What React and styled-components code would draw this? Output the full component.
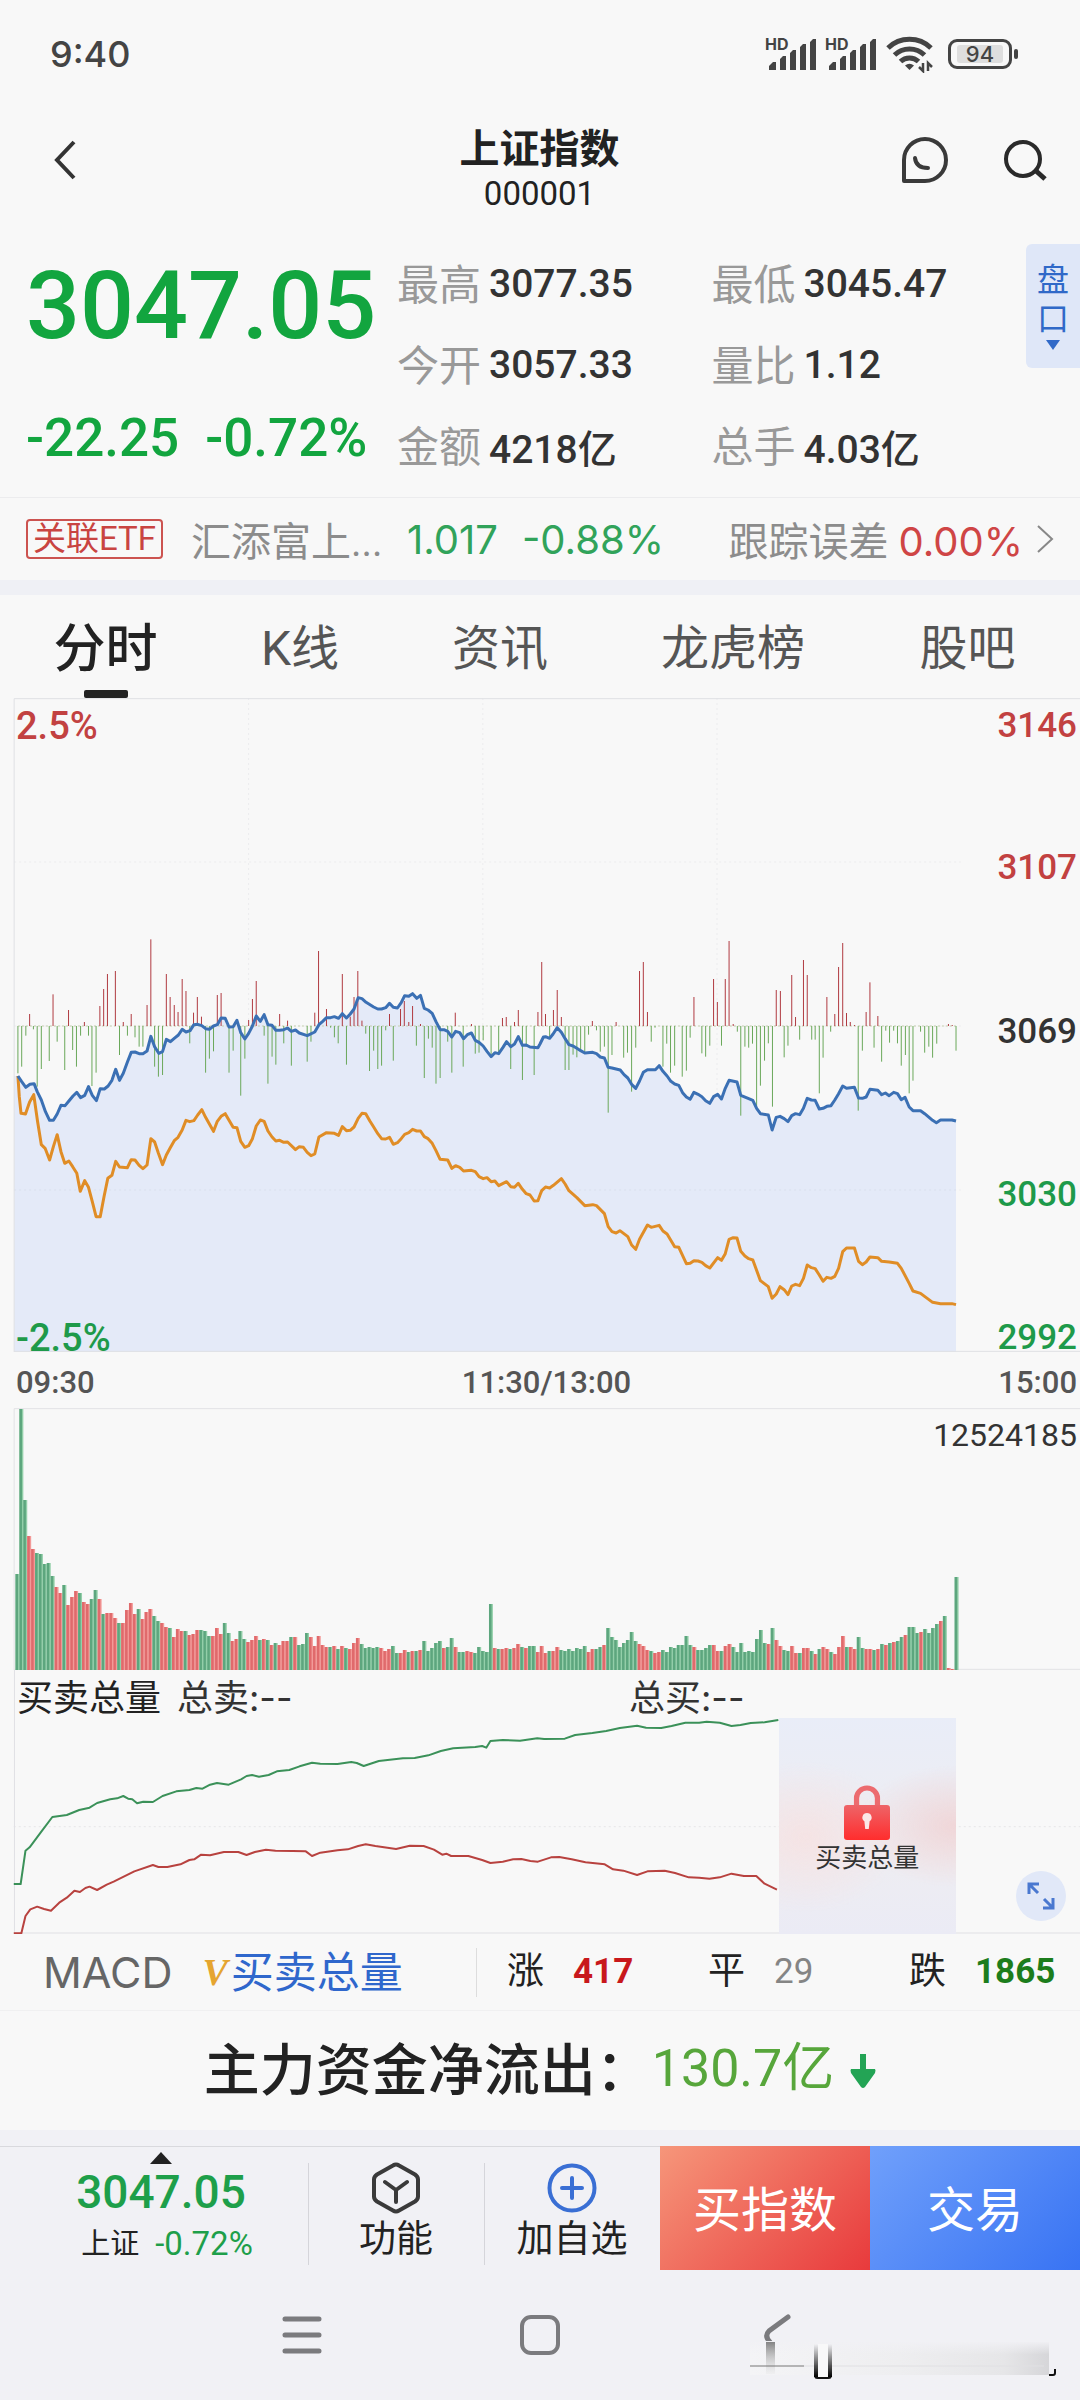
import styled, { createGlobalStyle } from 'styled-components';

const BLUE_LINE = '52,528 63,545 75,562 87,553 99,551 108,575 120,600 132,635 144,661 155,661 166,642 177,616 189,617 200,603 212,588 223,577 234,593 246,586 257,560 268,586 280,602 291,566 303,567 314,558 325,541 336,508 347,541 358,520 370,486 381,457 392,456 404,461 415,461 427,453 438,409 449,440 461,460 472,455 483,418 495,425 506,415 518,405 529,388 540,396 552,392 563,374 574,373 586,377 597,386 608,388 620,378 631,374 642,354 654,355 665,381 677,380 688,361 699,398 711,417 722,400 733,378 744,348 756,364 767,344 778,374 790,376 801,391 812,391 824,389 835,384 846,394 858,390 869,399 892,407 914,396 926,374 937,364 948,353 960,353 971,350 983,355 994,341 1006,354 1017,342 1028,327 1040,293 1051,296 1063,307 1085,321 1097,327 1108,327 1120,323 1131,310 1142,322 1154,324 1165,308 1175,287 1187,289 1198,281 1210,295 1221,286 1232,325 1243,330 1255,340 1266,365 1278,389 1289,389 1300,394 1312,411 1323,394 1335,398 1346,416 1357,404 1369,399 1380,421 1391,427 1403,438 1414,454 1426,470 1437,458 1448,461 1460,443 1471,425 1483,440 1494,432 1505,410 1517,436 1528,435 1539,441 1562,443 1568,432 1578,411 1584,410 1596,415 1606,402 1618,383 1630,397 1641,416 1652,434 1664,438 1675,445 1686,452 1698,459 1721,457 1732,461 1743,471 1755,474 1766,502 1777,504 1801,510 1812,524 1823,534 1834,553 1846,565 1857,543 1868,517 1880,509 1903,509 1914,497 1925,514 1937,528 1948,544 1959,552 1971,556 1982,578 1993,591 2004,598 2015,577 2027,583 2038,590 2049,602 2061,610 2072,590 2084,583 2095,597 2106,565 2117,541 2140,546 2151,586 2174,596 2186,601 2197,625 2208,641 2231,645 2242,690 2254,652 2265,649 2277,656 2288,665 2299,647 2310,641 2322,644 2333,625 2344,595 2356,600 2367,601 2379,627 2390,625 2401,619 2413,617 2424,600 2435,581 2447,558 2458,565 2481,562 2493,594 2504,595 2515,591 2526,568 2549,571 2560,584 2571,579 2582,587 2595,577 2606,581 2617,599 2628,592 2640,621 2651,632 2673,632 2685,641 2708,661 2719,668 2731,660 2764,660 2776,663';

const ORANGE_LINE = '52,528 56,590 61,640 74,642 86,606 98,584 109,664 120,734 131,745 144,780 155,740 166,704 177,755 188,790 200,783 211,800 223,820 233,874 246,842 257,862 268,905 279,950 291,950 302,890 313,835 325,826 336,784 347,801 370,803 381,779 392,780 404,796 415,806 427,795 438,716 449,726 460,760 472,794 483,765 494,744 506,722 517,712 529,690 540,661 551,665 563,662 574,645 586,629 597,652 608,672 620,694 631,664 642,649 654,641 665,661 677,682 688,683 699,724 711,742 722,737 733,716 744,678 756,660 767,664 778,693 790,711 801,723 812,721 824,727 835,726 858,749 869,740 881,742 892,757 903,767 914,762 926,711 948,698 971,700 983,706 994,680 1006,692 1017,691 1028,681 1040,655 1051,640 1062,641 1074,663 1085,681 1097,701 1108,716 1120,717 1131,712 1142,733 1154,728 1165,716 1175,703 1187,698 1198,688 1210,693 1221,693 1232,710 1243,716 1255,730 1266,752 1278,778 1300,780 1312,805 1323,797 1335,802 1346,813 1369,811 1380,815 1391,830 1403,836 1414,833 1426,845 1437,843 1448,857 1471,845 1483,860 1494,862 1505,850 1517,868 1528,881 1539,885 1551,903 1562,902 1568,885 1573,872 1584,861 1596,864 1607,856 1630,836 1641,852 1652,872 1675,893 1698,917 1721,914 1732,917 1755,941 1766,980 1777,995 1789,999 1800,992 1823,1010 1834,1035 1846,1048 1857,1018 1880,975 1891,982 1914,976 1925,993 1937,1002 1959,1040 1971,1042 1993,1091 2004,1090 2015,1082 2027,1083 2038,1087 2049,1097 2061,1104 2084,1073 2095,1081 2106,1061 2117,1018 2129,1013 2140,1014 2151,1054 2163,1068 2174,1076 2186,1080 2208,1142 2231,1160 2242,1195 2254,1182 2265,1160 2277,1169 2288,1184 2299,1158 2310,1153 2322,1157 2333,1135 2344,1095 2356,1103 2367,1106 2379,1125 2390,1144 2401,1132 2413,1135 2424,1129 2435,1105 2447,1055 2458,1044 2481,1044 2493,1084 2504,1094 2515,1086 2526,1071 2549,1073 2560,1084 2582,1086 2606,1090 2617,1105 2640,1150 2651,1173 2673,1180 2708,1207 2731,1211 2764,1211 2776,1214';

// x,y of the tip of each bar around the zero line
const ZERO_Y = 378;
const MOMENTUM = '52,520 63,500 75,407 86,342 97,388 108,560 120,507 143,483 154,283 166,425 188,510 199,330 211,450 222,500 234,407 245,366 257,407 267,558 279,518 290,318 301,267 312,222 335,213 347,465 358,366 370,407 381,342 392,412 404,440 415,440 427,315 438,118 449,500 460,530 472,525 483,222 494,291 506,315 517,336 529,237 540,273 551,430 562,338 573,291 585,350 597,518 608,476 620,454 631,285 642,279 665,518 677,452 699,587 711,476 722,360 733,297 744,243 767,407 778,551 790,470 801,494 812,342 824,430 835,362 846,497 892,485 903,425 914,338 925,153 948,327 960,383 971,412 982,430 994,222 1006,494 1017,350 1028,291 1039,213 1051,362 1062,401 1073,513 1085,452 1097,507 1108,497 1120,391 1131,342 1142,482 1163,327 1174,303 1187,366 1198,318 1209,437 1221,372 1232,534 1244,416 1255,443 1266,551 1278,534 1300,425 1312,518 1322,338 1345,500 1369,372 1380,461 1391,458 1403,421 1426,470 1448,458 1459,354 1470,351 1483,507 1494,366 1505,330 1517,540 1528,440 1551,525 1562,336 1573,186 1584,342 1596,416 1607,330 1618,270 1630,351 1641,510 1652,510 1664,464 1675,472 1686,450 1698,460 1709,404 1720,363 1732,391 1743,455 1755,440 1766,638 1777,465 1789,366 1811,473 1822,458 1834,575 1846,443 1857,213 1868,186 1880,336 1891,425 1902,383 1925,500 1936,431 1947,518 1959,497 1981,530 1993,512 2004,413 2015,291 2038,460 2049,470 2061,437 2072,237 2083,306 2095,437 2106,237 2117,123 2129,372 2141,395 2151,647 2163,440 2174,443 2185,431 2197,620 2208,557 2220,482 2231,430 2243,620 2254,270 2266,273 2277,472 2288,437 2299,225 2310,351 2322,419 2333,180 2344,225 2357,419 2367,419 2379,580 2390,473 2401,291 2412,395 2424,342 2435,201 2447,129 2458,339 2469,366 2481,375 2492,632 2504,452 2515,336 2526,247 2538,443 2549,348 2560,485 2572,392 2583,428 2595,392 2606,430 2617,497 2629,465 2640,580 2651,542 2673,395 2685,458 2697,440 2708,473 2720,431 2754,372 2765,375 2776,452'
    .split(' ')
    .map((p) => p.split(',').map(Number));

// one bar per minute: top of the bar, then g (down) or r (up)
const VOLUME_BASE = 900;
const VOLUME_STEP = 11.3625;
const VOLUME = ('612g 117g 390g 498r 537r 549g 552g 582g 579g 618g 651r 669r 645g 705r 681r 663r 669g 696r 702r 687g 660g 687r 732g 729r 729r 744r 759g 759r 720r 699r ' +
    '732r 717g 747r 726r 717r 738g 753g 759r 771r 774g 801r 777r 783r 783g 795r 792r 780r 780g 783g 798g 798r 774r 792r 759g 789g 813r 807r 783g 807g 816r ' +
    '810r 798r 810g 807r 810g 825r 819g 825r 813r 813r 801g 801r 825g 822g 789g 801r 828r 798r 825r 831r 831g 828r 837g 828r 834g 837r 819r 804r 822g 834g ' +
    '831g 834g 831g 834r 843r 837r 828g 849g 849r 840r 846g 843r 843g 840r 813g 843g 834g 819g 813g 834r 831g 804g 831r 846g 846g 843r 846r 849g 831g 843g ' +
    '846g 702g 834r 837g 837r 834r 837g 834r 822r 831g 834r 828g 828g 846r 828r 849r 843g 843r 831r 840g 843g 837g 843g 834g 837g 828g 846r 837r 837g 831g ' +
    '825r 774g 801g 810g 831g 819g 810g 786g 813g 822r 828r 840r 843g 849r 846r 840g 846g 831g 834g 825g 825g 798g 825g 831r 840g 840g 834g 825g 825r 843r ' +
    '843g 828r 822r 831g 846g 819g 846g 843g 846g 807g 780g 819g 822r 774g 810r 828r 840g 843g 828r 849r 849g 834r 834r 843g 852r 837g 831r 837r 846g 852r ' +
    '831r 798r 831g 831r 837r 801g 834g 837r 837r 840g 837r 822g 825r 819g 816r 813g 801g 795r 771g 771g 789g 786r 777g 789g 774g 762g 753r 738g 894r 897r 621g')
    .split(' ');

const SELL_LINE = '20,672 30,672 37,572 43,562 60,515 76,471 97,465 115,450 130,443 141,429 160,418 170,415 179,408 186,416 192,418 199,430 208,425 222,426 236,408 256,394 275,390 285,384 294,386 305,374 315,369 332,374 350,358 358,348 366,345 376,350 390,345 402,334 420,330 435,319 453,308 465,311 490,312 510,306 518,309 528,318 550,303 585,295 602,294 622,286 640,273 658,265 690,261 700,258 706,263 712,243 730,240 755,242 780,235 790,237 820,236 835,225 860,219 880,213 900,204 925,197 938,203 960,204 975,198 995,188 1015,188 1026,185 1045,188 1062,198 1075,195 1090,189 1110,187 1130,180';
const BUY_LINE = '20,820 31,820 37,768 44,748 54,740 64,747 74,752 86,728 97,713 108,692 116,696 124,684 130,680 141,690 155,674 165,665 195,634 222,615 230,621 243,621 262,613 275,600 282,598 292,584 305,586 325,576 346,576 358,585 370,576 386,569 400,572 425,573 444,574 453,588 465,578 490,571 505,568 520,558 531,553 545,558 575,567 595,557 615,558 630,569 642,584 648,581 655,588 680,588 700,600 712,609 730,605 745,598 757,597 770,603 781,605 800,592 812,591 830,598 850,607 878,613 890,628 905,632 925,645 940,634 965,632 980,639 1000,652 1015,653 1030,656 1045,652 1062,641 1080,648 1098,648 1110,671 1128,689';

const STATS = [
    ['最高', '3077.35'], ['最低', '3045.47'],
    ['今开', '3057.33'], ['量比', '1.12'],
    ['金额', '4218亿'], ['总手', '4.03亿'],
];
const TABS = ['分时', 'K线', '资讯', '龙虎榜', '股吧'];

function Signal() {
    return (
        <SignalBox>
            <span>HD</span>
            <svg width="50" height="34" viewBox="0 0 50 34" fill="#444">
                <path d="M3 33v-4l4-4h3v8zM14 33V22l3-3h3v14zM24 33V16l3-3h3v20zM34 33V10l3-3h3v26zM44 33V5l3-3h3v31z" />
            </svg>
        </SignalBox>
    );
}

function MinuteChart() {
    return (
        <Plot $height={654}>
            <svg viewBox="0 -606 3136 1962" preserveAspectRatio="none">
                <g stroke="#ececee" strokeDasharray="2 3">
                    {[-114, 378, 870].map((y) => <path key={y} d={`M41 ${y}H2790`} vectorEffect="non-scaling-stroke" />)}
                    {[722, 1402, 2082].map((x) => <path key={x} d={`M${x} -606V1358`} vectorEffect="non-scaling-stroke" />)}
                </g>
                <polygon points={`41,528 ${BLUE_LINE} 2776,1356 41,1356`} fill="#e4eaf8" />
                <path d="M41 870H2776" stroke="#d9dfec" strokeDasharray="2 3" vectorEffect="non-scaling-stroke" />
                <path d="M52 378H2776" stroke="#c3cfae" strokeDasharray="2 2" vectorEffect="non-scaling-stroke" />
                {MOMENTUM.map(([x, y]) => (
                    <path
                        key={x}
                        d={`M${x} ${ZERO_Y}V${y}`}
                        stroke={y < ZERO_Y ? '#b03a40' : '#6aa85a'}
                        vectorEffect="non-scaling-stroke"
                    />
                ))}
                <polyline points={ORANGE_LINE} fill="none" stroke="#e08d26" strokeWidth="3" strokeLinejoin="round" vectorEffect="non-scaling-stroke" />
                <polyline points={BLUE_LINE} fill="none" stroke="#3b70b4" strokeWidth="3" strokeLinejoin="round" vectorEffect="non-scaling-stroke" />
                <path d="M41 1356V-604H3136M41 1354H3136" fill="none" stroke="#dfe0e4" vectorEffect="non-scaling-stroke" />
            </svg>
            <PercentAxis>
                <Axis $color="#c24141">2.5%</Axis>
                <Axis $color="#1e9a4a">-2.5%</Axis>
            </PercentAxis>
            <PriceAxis>
                <Axis $color="#c24141">3146</Axis>
                <Axis $color="#c24141">3107</Axis>
                <Axis $color="#333">3069</Axis>
                <Axis $color="#1e9a4a">3030</Axis>
                <Axis $color="#1e9a4a">2992</Axis>
            </PriceAxis>
        </Plot>
    );
}

function VolumeChart() {
    return (
        <Plot $height={262}>
            <svg viewBox="0 114 3136 786" preserveAspectRatio="none">
                <path d="M41 900V116H3136M41 898H3136" fill="none" stroke="#e2e2e5" vectorEffect="non-scaling-stroke" />
                {VOLUME.map((bar, i) => {
                    const top = parseInt(bar, 10);
                    const x = 45 + i * VOLUME_STEP;
                    const up = bar.endsWith('r');
                    return (
                        <g key={i}>
                            <rect x={x} y={top} width="11.4" height={VOLUME_BASE - top} fill={up ? '#f39a98' : '#93cfa9'} />
                            <rect x={x} y={top} width="7.4" height={VOLUME_BASE - top} fill={up ? '#e06a6c' : '#5da67e'} />
                        </g>
                    );
                })}
            </svg>
            <VolumeMax>12524185</VolumeMax>
        </Plot>
    );
}

function OrderChart() {
    return (
        <Plot $height={264}>
            <svg viewBox="0 30 1568 792" preserveAspectRatio="none">
                <path d="M20 500H1568" stroke="#e6e6e8" strokeDasharray="2 3" vectorEffect="non-scaling-stroke" />
                <path d="M21 30V819H1568" fill="none" stroke="#e0e0e4" vectorEffect="non-scaling-stroke" />
                <polyline points={SELL_LINE} fill="none" stroke="#3b9159" strokeWidth="2" strokeLinejoin="round" vectorEffect="non-scaling-stroke" />
                <polyline points={BUY_LINE} fill="none" stroke="#b8423f" strokeWidth="2" strokeLinejoin="round" vectorEffect="non-scaling-stroke" />
            </svg>
            <Legend>
                <strong>买卖总量</strong>
                <span>总卖:--</span>
                <span>总买:--</span>
            </Legend>
            <Locked type="button">
                <svg width="46" height="56" viewBox="0 0 44 56" preserveAspectRatio="none">
                    <defs>
                        <linearGradient id="lock" x1="0" y1="0" x2="0" y2="1">
                            <stop offset="0" stopColor="#ee6468" />
                            <stop offset="1" stopColor="#ff2d2d" />
                        </linearGradient>
                    </defs>
                    <path d="M12 24V13a10 10 0 0 1 20 0v11" fill="none" stroke="#ec6b6f" strokeWidth="5" />
                    <rect x="0" y="20" width="44" height="35" rx="3" fill="url(#lock)" />
                    <path d="M22 28a4.500 4.500 0 0 1 2.500 8.200l-.8 7.800h-3.400l-.8-7.800A4.500 4.500 0 0 1 22 28z" fill="#fbe6e6" />
                </svg>
                买卖总量
            </Locked>
            <Expand type="button" aria-label="expand">
                <svg width="28" height="28" viewBox="0 0 28 28" fill="none" stroke="#4a78d0" strokeWidth="3">
                    <path d="M12 2H2v10M2 2l9 9M16 26h10V16M26 26l-9-9" />
                </svg>
            </Expand>
        </Plot>
    );
}

function App() {
    return (
        <Page>
            <GlobalStyle />
            <StatusBar>
                <Clock>9:40</Clock>
                <StatusIcons>
                    <Signal />
                    <Signal />
                    <svg width="48" height="38" viewBox="0 0 48 38" fill="none" stroke="#444" strokeWidth="5">
                        <path d="M2 13a31 31 0 0 1 43 0M8.500 20a21.500 21.500 0 0 1 30 0M14.500 26.500a13 13 0 0 1 18 0" />
                        <path d="M19 30.500q4.500-3.500 9 0L23.500 35z" fill="#444" stroke="none" />
                        <path d="M37 28v8l-4-4M42 36v-8l4 4" strokeWidth="2.500" />
                    </svg>
                    <Battery><span>94</span></Battery>
                </StatusIcons>
            </StatusBar>

            <Header>
                <IconButton type="button" aria-label="back">
                    <svg width="24" height="42" viewBox="0 0 24 42" fill="none" stroke="#333" strokeWidth="4">
                        <path d="M21 3L4 21l17 18" />
                    </svg>
                </IconButton>
                <Heading>
                    <h1>上证指数</h1>
                    <p>000001</p>
                </Heading>
                <HeaderActions>
                    <IconButton type="button" aria-label="chat">
                        <svg width="48" height="48" viewBox="0 0 48 48" fill="none" stroke="#3a3a3a" strokeWidth="4" strokeLinejoin="round" strokeLinecap="round">
                            <path d="M3 45V24a21 21 0 1 1 21 21z" />
                            <path d="M14 22q1 10 13 10" />
                        </svg>
                    </IconButton>
                    <IconButton type="button" aria-label="search">
                        <svg width="46" height="44" viewBox="0 0 46 44" fill="none" stroke="#2a2a2a" strokeWidth="4">
                            <circle cx="21" cy="21" r="17" />
                            <path d="M33 32l10 9" strokeWidth="5" />
                        </svg>
                    </IconButton>
                </HeaderActions>
            </Header>

            <Quote>
                <PriceColumn>
                    <Price>3047.05</Price>
                    <Change><span>-22.25</span><span>-0.72%</span></Change>
                </PriceColumn>
                <Stats>
                    {STATS.map(([label, value]) => (
                        <Stat key={label}><dt>{label}</dt><dd>{value}</dd></Stat>
                    ))}
                </Stats>
                <SideTab type="button">
                    <span>盘</span>
                    <span>口</span>
                    <svg width="14" height="10" viewBox="0 0 14 10"><path d="M0 0h14L7 10z" fill="#3069c8" /></svg>
                </SideTab>
            </Quote>

            <EtfRow href="#etf">
                <EtfTag>关联ETF</EtfTag>
                <EtfName>汇添富上...</EtfName>
                <EtfValue $color="#31a35a">1.017</EtfValue>
                <EtfValue $color="#31a35a">-0.88%</EtfValue>
                <EtfError>跟踪误差 <EtfValue $color="#cf4545">0.00%</EtfValue></EtfError>
                <svg width="18" height="28" viewBox="0 0 18 28" fill="none" stroke="#888" strokeWidth="2">
                    <path d="M2 1l14 13L2 27" />
                </svg>
            </EtfRow>
            <Strip />

            <Tabs>
                {TABS.map((tab, i) => <Tab key={tab} type="button" $active={i === 0}>{tab}</Tab>)}
            </Tabs>
            <MinuteChart />
            <Times><span>09:30</span><span>11:30/13:00</span><span>15:00</span></Times>
            <VolumeChart />
            <OrderChart />

            <Summary>
                <Indicators>
                    <IndicatorButton type="button" $color="#666">MACD</IndicatorButton>
                    <IndicatorButton type="button" $color="#2f67cc"><em>V</em>买卖总量</IndicatorButton>
                </Indicators>
                <Counts>
                    <Count $color="#c8181c" $bold>涨 <b>417</b></Count>
                    <Count $color="#858585">平 <b>29</b></Count>
                    <Count $color="#1c7d1c" $bold>跌 <b>1865</b></Count>
                </Counts>
            </Summary>

            <FlowRow>
                <span>主力资金净流出：</span>
                <FlowValue>130.7亿</FlowValue>
                <svg width="26" height="36" viewBox="0 0 26 36" fill="#23a455">
                    <path d="M10 1h6v15h9q1 1 0 4L15 34q-2 2-4 0L1 20q-1-3 0-4h9z" />
                </svg>
            </FlowRow>

            <Bottom>
                <ActionBar>
                    <IndexCell type="button">
                        <svg width="22" height="12" viewBox="0 0 22 12"><path d="M11 0l11 12H0z" fill="#222" /></svg>
                        <strong>3047.05</strong>
                        <p>上证 <span>-0.72%</span></p>
                    </IndexCell>
                    <ToolCell type="button">
                        <svg width="50" height="52" viewBox="0 0 50 52" fill="none" stroke="#3a3a3a" strokeWidth="4" strokeLinejoin="round" strokeLinecap="round">
                            <path d="M25 2.500q1.500 0 3 1l16 9q3 2 3 5v17q0 3-3 5l-16 9q-3 2-6 0l-16-9q-3-2-3-5v-17q0-3 3-5l16-9q1.500-1 3-1zM14 20l11 8 11-8M25 28v12" />
                        </svg>
                        功能
                    </ToolCell>
                    <ToolCell type="button">
                        <svg width="50" height="52" viewBox="0 0 50 52" fill="none" stroke="#3a6fd4" strokeWidth="4" strokeLinecap="round">
                            <circle cx="25" cy="26" r="22.500" />
                            <path d="M15 26h20M25 16v20" />
                        </svg>
                        加自选
                    </ToolCell>
                    <TradeButton type="button" $from="#f6967a" $to="#e83a3c">买指数</TradeButton>
                    <TradeButton type="button" $from="#70a0fb" $to="#3873f3">交易</TradeButton>
                </ActionBar>
                <SystemNav>
                    <IconButton type="button" aria-label="menu">
                        <svg width="40" height="40" viewBox="0 0 40 40" stroke="#7b7b7e" strokeWidth="5" strokeLinecap="round">
                            <path d="M3 4h34M3 20h34M3 36h34" />
                        </svg>
                    </IconButton>
                    <IconButton type="button" aria-label="home">
                        <svg width="42" height="42" viewBox="0 0 42 42" fill="none" stroke="#7b7b7e" strokeWidth="4">
                            <rect x="3" y="3" width="36" height="36" rx="9" />
                        </svg>
                    </IconButton>
                    <IconButton type="button" aria-label="return">
                        <svg width="28" height="42" viewBox="0 0 28 42" fill="none" stroke="#7b7b7e" strokeWidth="5" strokeLinecap="round">
                            <path d="M24 3L5 17q-5 5 1 11" />
                        </svg>
                    </IconButton>
                    <Smear>
                        <svg width="308" height="40" viewBox="0 0 308 40">
                            <defs>
                                <linearGradient id="haze">
                                    <stop offset="0" stopColor="#f4f4f6" />
                                    <stop offset="0.5" stopColor="#eeeef0" />
                                    <stop offset="0.85" stopColor="#e6e6e8" />
                                    <stop offset="1" stopColor="#d6d6d9" />
                                </linearGradient>
                                <linearGradient id="fade" x1="0" y1="0" x2="0" y2="1">
                                    <stop offset="0" stopColor="#f1f1f5" />
                                    <stop offset="0.400" stopColor="#f1f1f5" stopOpacity="0" />
                                </linearGradient>
                                <linearGradient id="drip" x1="0" y1="0" x2="0" y2="1">
                                    <stop offset="0" stopColor="#777" stopOpacity="0.900" />
                                    <stop offset="1" stopColor="#ccc" stopOpacity="0.100" />
                                </linearGradient>
                                <linearGradient id="ink" x1="0" y1="0" x2="0" y2="1">
                                    <stop offset="0" stopColor="#000" stopOpacity="0" />
                                    <stop offset="1" stopColor="#000" />
                                </linearGradient>
                            </defs>
                            <path d="M1 2h299v33H1z" fill="url(#haze)" />
                            <path d="M1 1h300v34H1z" fill="url(#fade)" />
                            <rect x="17" y="2" width="9" height="32" fill="url(#drip)" />
                            <path d="M1 26h54" stroke="#777" />
                            <path d="M55 26h240" stroke="#e0e0e3" />
                            <rect x="65" y="4" width="4" height="33" fill="url(#ink)" />
                            <rect x="79" y="4" width="4" height="33" fill="url(#ink)" />
                            <rect x="69" y="4" width="10" height="33" fill="#f8f8f9" />
                            <path d="M66 37q1 1 3 1h10q2 0 3-1M300 35h4q2 0 2-2v-4" fill="none" stroke="#111" strokeWidth="2" />
                        </svg>
                    </Smear>
                </SystemNav>
            </Bottom>
        </Page>
    );
}

const GlobalStyle = createGlobalStyle`
    * {
        box-sizing: border-box;
    }
    body, h1, p, dl, dd {
        margin: 0;
    }
    body {
        background: #f8f8f8;
    }
    button {
        border: 0;
        padding: 0;
        background: none;
        color: inherit;
        font: inherit;
        cursor: pointer;
    }
    svg {
        display: block;
        flex: none;
    }
`;

const Page = styled.div`
    min-height: 100vh;
    display: flex;
    flex-direction: column;
    background: #f8f8f8;
    color: #222;
    font-family: Roboto, 'Noto Sans CJK SC', sans-serif;
    overflow: hidden;
`;

const StatusBar = styled.div`
    height: 108px;
    padding: 0 68px 0 50px;
    display: flex;
    align-items: center;
    justify-content: space-between;
    color: #444;
    font-family: Inter, sans-serif;
`;

const Clock = styled.span`
    font-size: 36px;
    font-weight: 500;
`;

const StatusIcons = styled.div`
    display: flex;
    align-items: center;
    gap: 10px;
`;

const SignalBox = styled.div`
    position: relative;
    span {
        position: absolute;
        left: -1px;
        top: -1px;
        font-size: 16px;
        line-height: 16px;
        font-weight: 700;
    }
`;

const Battery = styled.div`
    position: relative;
    width: 64px;
    height: 30px;
    margin: 0 0 0 4px;
    padding: 3px 6px;
    border: 3px solid #444;
    border-radius: 9px;
    span {
        display: block;
        background: #dedede;
        border-radius: 3px;
        font-size: 22px;
        line-height: 18px;
        font-weight: 500;
        text-align: center;
    }
    &::after {
        content: '';
        position: absolute;
        right: -9px;
        top: 7px;
        width: 4px;
        height: 10px;
        border-radius: 2px;
        background: #444;
    }
`;

const Header = styled.header`
    height: 124px;
    padding: 18px 32px 0 53px;
    display: grid;
    grid-template-columns: 1fr auto 1fr;
    align-items: start;
`;

const IconButton = styled.button`
    height: 68px;
    display: flex;
    align-items: center;
    justify-content: center;
    justify-self: start;
`;

const Heading = styled.div`
    margin-right: 22px;
    text-align: center;
    h1 {
        font-size: 40px;
        line-height: 48px;
        font-weight: 700;
    }
    p {
        font-size: 33px;
        line-height: 40px;
    }
`;

const HeaderActions = styled.div`
    display: flex;
    justify-content: flex-end;
    gap: 53px;
`;

const Quote = styled.section`
    display: grid;
    grid-template-columns: 371fr 629fr 54px;
    align-items: start;
    height: 265px;
    padding: 12px 0 0 26px;
`;

const PriceColumn = styled.div`
    padding-top: 14px;
    display: flex;
    flex-direction: column;
    gap: 52px;
    color: #12a53f;
    font-weight: 500;
`;

const Price = styled.div`
    font-size: 95px;
    line-height: 96px;
`;

const Change = styled.div`
    display: flex;
    gap: 26px;
    font-size: 53px;
    line-height: 64px;
`;

const Stats = styled.dl`
    display: grid;
    grid-template-columns: 1fr 1fr;
`;

const Stat = styled.div`
    height: 81px;
    padding-bottom: 2px;
    display: flex;
    align-items: center;
    gap: 8px;
    dt {
        padding-bottom: 4px;
        font-size: 42px;
        color: #999;
    }
    dd {
        font-size: 39px;
        font-weight: 500;
        color: #333;
        white-space: nowrap;
    }
`;

const SideTab = styled.button`
    height: 124px;
    display: flex;
    flex-direction: column;
    align-items: center;
    justify-content: center;
    gap: 3px;
    background: #dfe7f8;
    border-radius: 6px 0 0 6px;
    color: #3069c8;
    span {
        font-size: 32px;
        line-height: 36px;
    }
`;

const EtfRow = styled.a`
    height: 83px;
    padding: 0 26px;
    display: flex;
    align-items: center;
    border-top: 1px solid #ececee;
    color: #8c8c8c;
    font-size: 40px;
    text-decoration: none;
    white-space: nowrap;
`;

const EtfTag = styled.span`
    height: 40px;
    padding: 0 5px;
    border: 2px solid #cc5350;
    border-radius: 4px;
    color: #c94441;
    font-size: 33px;
    line-height: 36px;
`;

const EtfName = styled.span`
    width: 216px;
    margin-left: 28px;
`;

const EtfValue = styled.span`
    margin-right: 24px;
    font-family: Inter, sans-serif;
    font-size: 40px;
    color: ${({ $color }) => $color};
`;

const EtfError = styled.span`
    margin-left: auto;
    ${EtfValue} {
        margin-right: 13px;
    }
`;

const Strip = styled.div`
    height: 15px;
    background: #eff0f5;
`;

const Tabs = styled.nav`
    height: 103px;
    display: grid;
    grid-template-columns: 211fr 178fr 222fr 244fr 225fr;
`;

const Tab = styled.button`
    position: relative;
    padding-bottom: 5px;
    font-size: ${({ $active }) => ($active ? 52 : 48)}px;
    font-weight: ${({ $active }) => ($active ? 500 : 400)};
    color: ${({ $active }) => ($active ? '#222' : '#555')};
    &::after {
        content: '';
        display: ${({ $active }) => ($active ? 'block' : 'none')};
        position: absolute;
        left: calc(50% - 22px);
        bottom: 0;
        width: 44px;
        height: 8px;
        border-radius: 2px;
        background: #222;
    }
`;

const Plot = styled.section`
    position: relative;
    height: ${({ $height }) => $height}px;
    > svg {
        width: 100%;
        height: 100%;
    }
`;

const PercentAxis = styled.div`
    position: absolute;
    inset: 8px auto -6px 16px;
    display: flex;
    flex-direction: column;
    justify-content: space-between;
    font-size: 38px;
`;

const PriceAxis = styled.div`
    position: absolute;
    inset: 8px 3px -6px auto;
    display: grid;
    grid-template-rows: 142fr 164fr 164fr 143fr 40px;
    font-size: 35px;
`;

const Axis = styled.span`
    color: ${({ $color }) => $color};
    line-height: 40px;
    font-weight: 500;
`;

const Times = styled.div`
    height: 56px;
    padding: 4px 3px 0 16px;
    display: flex;
    align-items: center;
    justify-content: space-between;
    color: #555;
    font-size: 31px;
    font-weight: 500;
`;

const VolumeMax = styled.span`
    position: absolute;
    top: 7px;
    right: 3px;
    font-size: 32px;
    line-height: 40px;
    color: #333;
`;

const Legend = styled.div`
    position: absolute;
    inset: 4px 0 auto 17px;
    display: grid;
    grid-template-columns: 160fr 452fr 451fr;
    align-items: baseline;
    font-family: Inter, 'Noto Sans CJK SC', sans-serif;
    font-size: 36px;
    line-height: 48px;
    color: #333;
    white-space: nowrap;
    strong {
        font-weight: 400;
        color: #222;
    }
`;

const Locked = styled.button`
    position: absolute;
    top: 48px;
    bottom: 0;
    left: 72.1%;
    width: 16.4%;
    padding-top: 8px;
    display: flex;
    flex-direction: column;
    align-items: center;
    justify-content: center;
    background:
        radial-gradient(ellipse at 100% 50%, #f0d6d8 0%, rgba(240, 214, 216, 0) 40%),
        radial-gradient(ellipse at 15% 55%, #f5e3e4 0%, rgba(245, 227, 228, 0) 45%),
        linear-gradient(#e9edf8, #eeedf1 60%, #ebebf5);
    font-size: 26px;
    line-height: 34px;
    color: #333;
`;

const Expand = styled.button`
    position: absolute;
    right: 14px;
    bottom: 13px;
    width: 50px;
    height: 50px;
    display: flex;
    align-items: center;
    justify-content: center;
    border-radius: 50%;
    background: #e1e8f8;
`;

const Summary = styled.section`
    height: 77px;
    display: grid;
    grid-template-columns: 477fr 603fr;
    align-items: center;
    border-bottom: 1px solid #f0f0f1;
`;

const Indicators = styled.div`
    height: 49px;
    padding-left: 43px;
    display: flex;
    align-items: center;
    gap: 30px;
    border-right: 1px solid #ddd;
`;

const IndicatorButton = styled.button`
    display: flex;
    align-items: center;
    font-family: Inter, 'Noto Sans CJK SC', sans-serif;
    font-size: 43px;
    line-height: 48px;
    color: ${({ $color }) => $color};
    em {
        margin-right: 3px;
        color: #e5a530;
        font-family: 'Liberation Serif', serif;
        font-size: 38px;
        font-weight: 700;
    }
`;

const Counts = styled.div`
    padding-left: 30px;
    display: grid;
    grid-template-columns: 201fr 201fr 171fr;
`;

const Count = styled.div`
    display: flex;
    align-items: center;
    gap: 29px;
    font-size: 37px;
    line-height: 48px;
    b {
        font-size: 35px;
        font-weight: ${({ $bold }) => ($bold ? 700 : 400)};
        color: ${({ $color }) => $color};
    }
`;

const FlowRow = styled.section`
    height: 119px;
    display: flex;
    align-items: center;
    justify-content: center;
    font-size: 56px;
    line-height: 64px;
    font-weight: 500;
`;

const FlowValue = styled.span`
    margin-right: 16px;
    padding-bottom: 4px;
    font-size: 52px;
    font-weight: 400;
    color: #57a63b;
`;

const Bottom = styled.footer`
    flex: 1;
    padding-top: 16px;
    background: #f1f1f5;
`;

const ActionBar = styled.div`
    height: 124px;
    display: grid;
    grid-template-columns: 308fr 176fr 176fr 210fr 210fr;
    border-top: 1px solid #d9d9dd;
`;

const IndexCell = styled.button`
    padding: 5px 0 0 14px;
    display: flex;
    flex-direction: column;
    align-items: center;
    strong {
        font-size: 46px;
        line-height: 56px;
        font-weight: 500;
        color: #1e9f4a;
    }
    p {
        padding-left: 12px;
        display: flex;
        align-items: center;
        gap: 16px;
        font-size: 29px;
        line-height: 48px;
    }
    span {
        font-size: 33px;
        color: #1e9f4a;
    }
`;

const ToolCell = styled.button`
    display: flex;
    flex-direction: column;
    align-items: center;
    padding-top: 15px;
    font-size: 37px;
    line-height: 52px;
    background: linear-gradient(#d5d5da, #d5d5da) left 16px / 1px 102px no-repeat;
`;

const TradeButton = styled.button`
    margin-top: -1px;
    padding-bottom: 4px;
    color: #fff;
    font-size: 48px;
    background: linear-gradient(135deg, ${({ $from }) => $from}, ${({ $to }) => $to});
`;

const SystemNav = styled.nav`
    position: relative;
    height: 130px;
    padding: 0 17%;
    display: grid;
    grid-template-columns: repeat(3, 1fr);
    align-items: center;
    ${IconButton} {
        justify-self: center;
    }
`;

const Smear = styled.div`
    position: absolute;
    right: 23px;
    bottom: 20px;
`;

export default App;
